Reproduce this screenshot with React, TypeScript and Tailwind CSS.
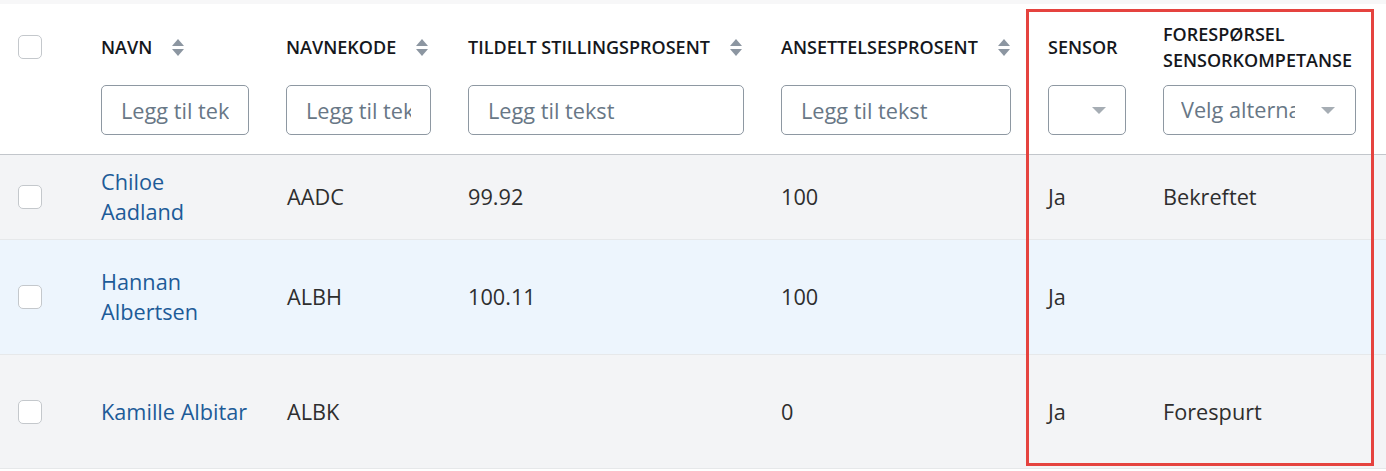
const font = { fontFamily: '"Open Sans", "Noto Sans", sans-serif' };

const cols = 'grid grid-cols-[83px_186px_181px_313px_267px_115px_1fr]';

type Row = {
  first: string;
  last?: string;
  code: string;
  tildelt: string;
  ansatt: string;
  sensor: string;
  foresp: string;
  bg: string;
  h: string;
};

const rows: Row[] = [
  { first: 'Chiloe', last: 'Aadland', code: 'AADC', tildelt: '99.92', ansatt: '100', sensor: 'Ja', foresp: 'Bekreftet', bg: 'bg-[#f3f4f6]', h: 'h-[85px]' },
  { first: 'Hannan', last: 'Albertsen', code: 'ALBH', tildelt: '100.11', ansatt: '100', sensor: 'Ja', foresp: '', bg: 'bg-[#edf5fd]', h: 'h-[115px]' },
  { first: 'Kamille Albitar', code: 'ALBK', tildelt: '', ansatt: '0', sensor: 'Ja', foresp: 'Forespurt', bg: 'bg-[#f3f4f6]', h: 'h-[114px]' },
];

function SortIcon() {
  return (
    <svg width="12" height="17" viewBox="0 0 12 17" className="shrink-0">
      <path d="M6 0 L12 7 L0 7 Z" fill="#8c96a1" />
      <path d="M0 10 L12 10 L6 17 Z" fill="#8c96a1" />
    </svg>
  );
}

function Checkbox() {
  return <div className="w-6 h-6 rounded-[5px] border border-[#c4c8cc] bg-white" />;
}

function TextFilter({ width }: { width: string }) {
  return (
    <input
      readOnly
      placeholder="Legg til tekst"
      className={`${width} h-[50px] rounded-[5px] border border-[#8e98a2] bg-white px-[19px] text-[21.7px] text-[#2e2e2e] placeholder:text-[#687786] outline-none`}
      style={font}
    />
  );
}

function SelectFilter({ width, text }: { width: string; text?: string }) {
  return (
    <div className={`${width} h-[50px] rounded-[5px] border border-[#8e98a2] bg-white pl-[17px] pr-[20px] flex items-center gap-[26px]`}>
      <span className="flex-1 overflow-hidden whitespace-nowrap text-[21.7px] text-[#687786]">{text}</span>
      <svg width="14" height="7" viewBox="0 0 14 7" className="shrink-0">
        <path d="M0 0 L14 0 L7 7 Z" fill="#a6adb4" />
      </svg>
    </div>
  );
}

function HeaderLabel({ label, sort = true }: { label: string; sort?: boolean }) {
  return (
    <div className="h-[54px] flex items-center gap-5">
      <span className="text-[18px] font-semibold uppercase leading-[26px] text-[#15171c]">{label}</span>
      {sort && <SortIcon />}
    </div>
  );
}

export default function App() {
  return (
    <div className="relative w-[1386px] h-[471px] bg-white overflow-hidden" style={font}>
      <div className="h-1 bg-[#f7f7f8]" />

      {/* Header */}
      <div className={`${cols} pt-4 pb-[19px] border-b border-[#c2c6cb]`}>
        <div className="pl-[18px] h-[54px] flex items-center">
          <Checkbox />
        </div>
        <div className="pl-[18px] flex flex-col gap-[11px]">
          <HeaderLabel label="Navn" />
          <TextFilter width="w-[148px]" />
        </div>
        <div className="pl-[17px] flex flex-col gap-[11px]">
          <HeaderLabel label="Navnekode" />
          <TextFilter width="w-[145px]" />
        </div>
        <div className="pl-[18px] flex flex-col gap-[11px]">
          <HeaderLabel label="Tildelt stillingsprosent" />
          <TextFilter width="w-[276px]" />
        </div>
        <div className="pl-[18px] flex flex-col gap-[11px]">
          <HeaderLabel label="Ansettelsesprosent" />
          <TextFilter width="w-[230px]" />
        </div>
        <div className="pl-[18px] flex flex-col gap-[11px]">
          <HeaderLabel label="Sensor" sort={false} />
          <SelectFilter width="w-[78px]" />
        </div>
        <div className="pl-[18px] flex flex-col gap-[11px]">
          <div className="h-[54px] flex items-center">
            <span className="w-[205px] text-[18px] font-semibold uppercase leading-[26px] text-[#15171c]">
              Forespørsel sensorkompetanse
            </span>
          </div>
          <SelectFilter width="w-[193px]" text="Velg alternativ" />
        </div>
      </div>

      {/* Rows */}
      {rows.map((r) => (
        <div key={r.code} className={`${cols} ${r.h} ${r.bg} items-center border-b border-[#e6e8ea] text-[21.7px] leading-[30px] text-[#2e2e2e]`}>
          <div className="pl-[18px]">
            <Checkbox />
          </div>
          <div className="pl-[18px] text-[#1d5b98]">
            {r.last ? (
              <>
                <div>{r.first}</div>
                <div>{r.last}</div>
              </>
            ) : (
              <div className="whitespace-nowrap">{r.first}</div>
            )}
          </div>
          <div className="pl-[18px]">{r.code}</div>
          <div className="pl-[18px]">{r.tildelt}</div>
          <div className="pl-[18px]">{r.ansatt}</div>
          <div className="pl-[18px]">{r.sensor}</div>
          <div className="pl-[18px]">{r.foresp}</div>
        </div>
      ))}

      {/* Highlight annotation */}
      <div className="absolute left-[1026px] top-[9px] w-[348px] h-[457px] border-[3px] border-[#e5433f] pointer-events-none" />
    </div>
  );
}
